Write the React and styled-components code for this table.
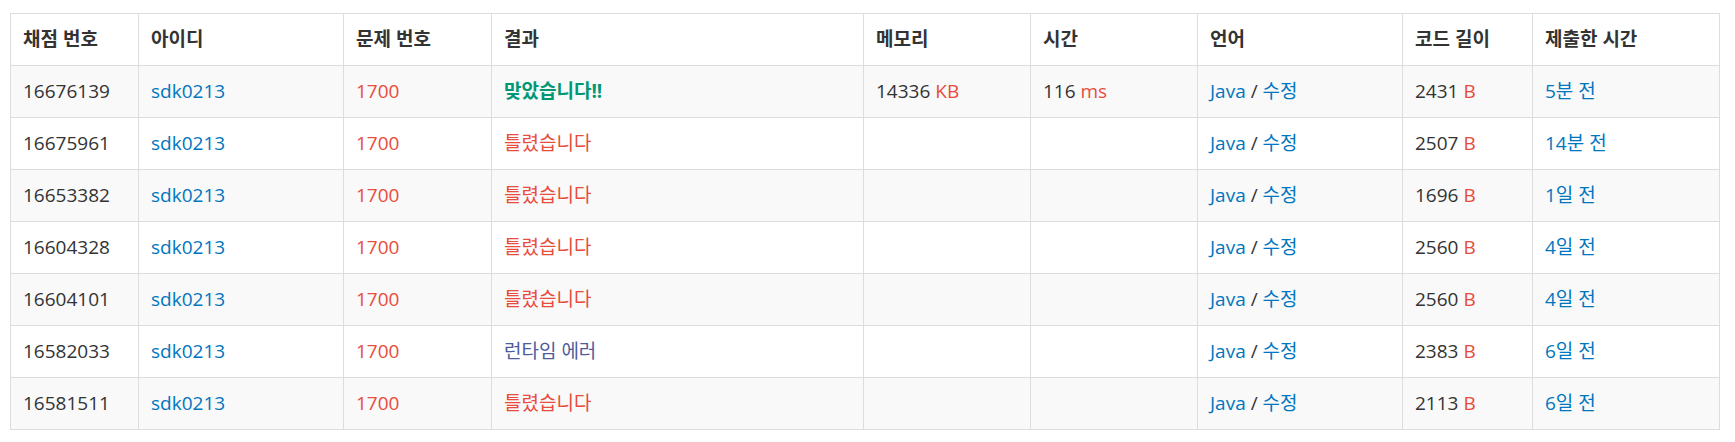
import React from 'react';
import styled, { createGlobalStyle } from 'styled-components';

const GlobalStyle = createGlobalStyle`
    body {
        margin: 0;
        background: #fff;
        font-family: "Open Sans", "Noto Sans CJK KR", sans-serif;
        color: #333;
    }
`;

const columns = [
    { label: '채점 번호', width: 128 },
    { label: '아이디', width: 205 },
    { label: '문제 번호', width: 148 },
    { label: '결과', width: 372 },
    { label: '메모리', width: 167 },
    { label: '시간', width: 167 },
    { label: '언어', width: 205 },
    { label: '코드 길이', width: 130 },
    { label: '제출한 시간', width: 187 },
];

const rows = [
    { id: 16676139, result: 'ac', memory: 14336, time: 116, length: 2431, ago: '5분 전' },
    { id: 16675961, result: 'wa', length: 2507, ago: '14분 전' },
    { id: 16653382, result: 'wa', length: 1696, ago: '1일 전' },
    { id: 16604328, result: 'wa', length: 2560, ago: '4일 전' },
    { id: 16604101, result: 'wa', length: 2560, ago: '4일 전' },
    { id: 16582033, result: 'rte', length: 2383, ago: '6일 전' },
    { id: 16581511, result: 'wa', length: 2113, ago: '6일 전' },
];

const resultText = {
    ac: '맞았습니다!!',
    wa: '틀렸습니다',
    rte: '런타임 에러',
};

const App = () => {
    return (
        <Wrapper>
            <GlobalStyle />
            <Table>
                <colgroup>
                    {columns.map(c => <col key={c.label} width={c.width} />)}
                </colgroup>
                <thead>
                    <tr>
                        {columns.map(c => <Th key={c.label}>{c.label}</Th>)}
                    </tr>
                </thead>
                <tbody>
                    {rows.map((r, i) => (
                        <Row key={r.id} $striped={i % 2 === 0}>
                            <Td>{r.id}</Td>
                            <Td><Link>sdk0213</Link></Td>
                            <Td><Problem>1700</Problem></Td>
                            <Td><Result $kind={r.result}>{resultText[r.result]}</Result></Td>
                            <Td>
                                {r.memory && <>{r.memory} <Unit>KB</Unit></>}
                            </Td>
                            <Td>
                                {r.time && <>{r.time} <Unit>ms</Unit></>}
                            </Td>
                            <Td><Link>Java</Link> / <Link>수정</Link></Td>
                            <Td>{r.length} <Unit>B</Unit></Td>
                            <Td><Link>{r.ago}</Link></Td>
                        </Row>
                    ))}
                </tbody>
            </Table>
        </Wrapper>
    );
}

export default App

const Wrapper = styled.div`
    padding: 13px 0 0 10px;
`;

const Table = styled.table`
    width: 1710px;
    table-layout: fixed;
    border-collapse: collapse;
    font-size: 19px;
`;

const Th = styled.th`
    text-align: left;
    font-weight: 700;
    padding: 15px 12px;
    line-height: 21px;
    border: 1px solid #ddd;
    color: #333;
`;

const Row = styled.tr`
    background-color: ${p => p.$striped ? '#f9f9f9' : '#fff'};
`;

const Td = styled.td`
    padding: 15px 12px;
    line-height: 21px;
    border: 1px solid #ddd;
    white-space: nowrap;
`;

const Link = styled.a`
    color: #0076c0;
    text-decoration: none;
`;

const Problem = styled.a`
    color: #e74c3c;
`;

const Unit = styled.span`
    color: #e74c3c;
`;

const resultColors = {
    ac: '#009874',
    wa: '#e74c3c',
    rte: '#4e5c9c',
};

const Result = styled.span`
    color: ${p => resultColors[p.$kind]};
    font-weight: ${p => p.$kind === 'ac' ? 700 : 400};
`;
